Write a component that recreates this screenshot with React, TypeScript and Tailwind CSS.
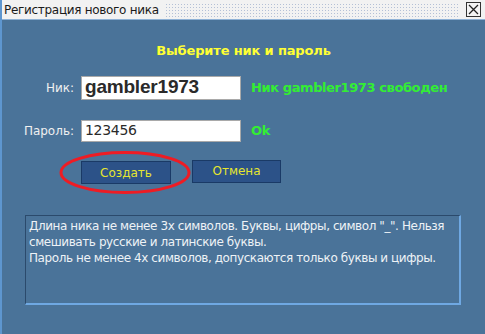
import React from 'react';

const font = { fontFamily: '"DejaVu Sans", "Liberation Sans", sans-serif' };

function TitleBar() {
  return (
    <div className="flex h-[20px] items-center bg-[#f2f2f2] border-b border-[#8fb2d6] pl-[2px] pr-[4px]">
      <span className="text-[12px] text-[#1a1a1a] tracking-[-0.3px] whitespace-nowrap">Регистрация нового ника</span>
      <div className="mx-[6px] h-[14px] flex-1 bg-[radial-gradient(circle,#b4c0d6_0.8px,transparent_1px)] bg-[length:3px_3px]" />
      <button className="flex h-[15px] w-[15px] items-center justify-center border border-[#333] bg-[#f4f4f4]">
        <svg width="11" height="11" viewBox="0 0 11 11">
          <path d="M1 1 L10 10 M10 1 L1 10" stroke="#222" strokeWidth="1.3" />
        </svg>
      </button>
    </div>
  );
}

function Row({ label, children, status, top }: { label: string; children: React.ReactNode; status: string; top: string }) {
  return (
    <div className={`flex items-center ${top}`}>
      <span className="w-[74px] pr-[2px] text-right text-[12px] text-[#f0f0f0]">{label}</span>
      <div className="ml-[5px]">{children}</div>
      <span className="ml-[10px] text-[13px] font-bold text-[#33ee33] tracking-[-0.4px]">{status}</span>
    </div>
  );
}

export default function App() {
  return (
    <div className="w-[485px] h-[334px] overflow-hidden bg-[#4a7399] border-l-2 border-[#5e96cf] flex flex-col" style={font}>
      <TitleBar />
      <div className="flex flex-1 flex-col">
        <h1 className="mt-[21px] text-center text-[13px] font-bold text-[#ffff33] tracking-[-0.15px]">Выберите ник и пароль</h1>

        <Row label="Ник:" status="Ник gambler1973 свободен" top="mt-[15px]">
          <div className="flex h-[24px] w-[160px] items-center border border-[#a9a9a9] bg-white pl-[3px] text-[19px] font-bold text-[#2a2a2a] tracking-[-0.2px] [font-family:'Liberation_Sans',sans-serif]">
            gambler1973
          </div>
        </Row>

        <Row label="Пароль:" status="Ok" top="mt-[20px]">
          <div className="flex h-[22px] w-[160px] items-center border border-[#a9a9a9] bg-white pl-[3px] text-[14px] text-[#2a2a2a] tracking-[-0.3px]">
            123456
          </div>
        </Row>

        <div className="mt-[18px] ml-[79px] flex gap-[21px]">
          <div className="relative">
            <button className="h-[23px] w-[90px] border border-[#1a3a66] bg-[#2c5288] text-[12px] text-[#e6e62e]">Создать</button>
            <svg className="absolute left-[-22px] top-[-10px]" width="134" height="45" viewBox="0 0 134 45">
              <ellipse cx="66" cy="22.5" rx="64" ry="20" fill="none" stroke="#ee1c24" strokeWidth="3" />
            </svg>
          </div>
          <button className="h-[23px] w-[89px] border border-[#1a3a66] bg-[#2c5288] text-[12px] text-[#e6e62e]">Отмена</button>
        </div>

        <div className="mt-[31px] ml-[23px] h-[90px] w-[436px] border-t border-l border-[#2b4a6c] border-r-2 border-b-2 border-r-[#6fa8e2] border-b-[#6fa8e2] px-[3px] pt-[2px] text-[12px] leading-[16px] text-[#eef2f6] tracking-[-0.42px]">
          Длина ника не менее 3х символов. Буквы, цифры, символ "_". Нельзя смешивать русские и латинские буквы.
          <br />
          Пароль не менее 4х символов, допускаются только буквы и цифры.
        </div>
      </div>
    </div>
  );
}
